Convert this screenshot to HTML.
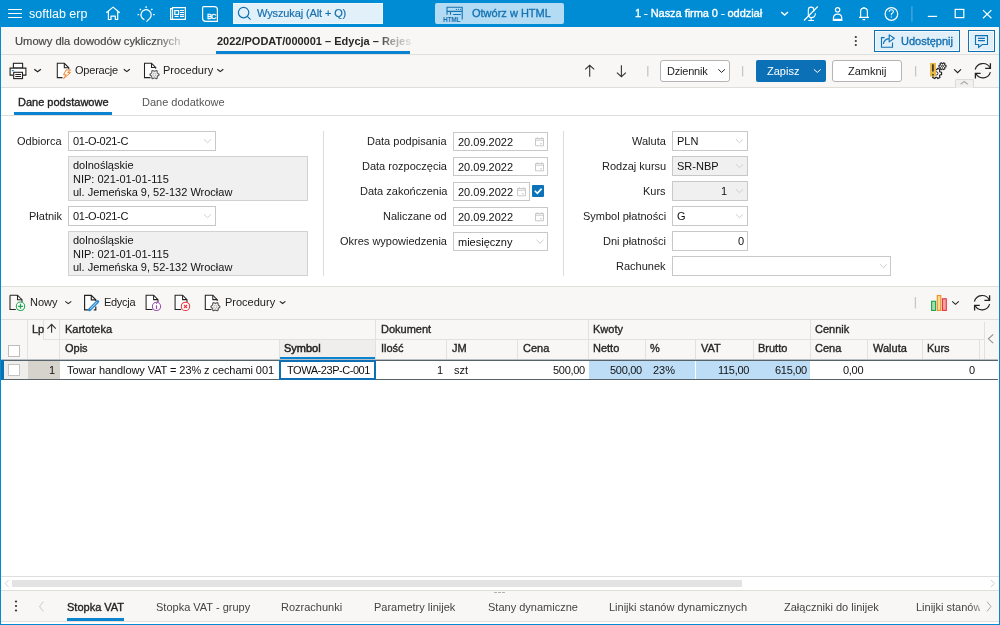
<!DOCTYPE html>
<html><head><meta charset="utf-8">
<style>
*{box-sizing:border-box;margin:0;padding:0}
html,body{width:1000px;height:625px;overflow:hidden;background:#fff}
body{position:relative;font-family:"Liberation Sans",sans-serif;font-size:11px;color:#222}
.a{position:absolute}
.t{position:absolute;white-space:nowrap;line-height:14px}
svg{position:absolute;overflow:visible;z-index:5}
.t{z-index:6;will-change:transform}
.m{-webkit-text-stroke:0.35px currentColor}
.inp{position:absolute;background:#fff;border:1px solid #c8c8c8}
.lbl{position:absolute;white-space:nowrap;line-height:14px;text-align:right;color:#222;font-size:11px;z-index:6;will-change:transform}
</style></head><body>
<!-- window borders -->
<div class="a" style="left:0;top:0;width:1000px;height:27px;background:#008cd5"></div>
<div class="a" style="left:0;top:0;width:1px;height:625px;background:#008cd5;z-index:50"></div>
<div class="a" style="left:999px;top:0;width:1px;height:625px;background:#008cd5;z-index:50"></div>
<div class="a" style="left:0;top:624px;width:1000px;height:1px;background:#008cd5;z-index:50"></div>

<!-- TITLE BAR -->
<div id="titlebar">
<svg width="1000" height="27" style="left:0;top:0" fill="none" stroke="#fff" stroke-width="1.2">
 <path d="M8 9.5H22M8 13.5H22M8 17.5H22" stroke-width="1.1"/>
 <path d="M106.3 12.8L113.1 7.1L119.7 12.8M108.4 11.2V19.5H111V16.2H115.3V19.5H117.7V11.2" stroke-linejoin="round"/>
 <path d="M144.4 19.6A5.1 5.1 0 1 1 149.8 18.3L146.5 21.6" />
 <path d="M146.1 6.3V8M139.8 8.9L140.9 10M152.4 8.9L151.3 10M137.6 14.7H139.2M153.1 14.7H154.7" stroke-width="1.3"/>
 <path d="M172.5 8.6H170.6V19.4H185.4V7.6H172.5V19.4"/>
 <rect x="174.8" y="10.6" width="3.8" height="3.9"/>
 <path d="M180 10.5H184M180 12.5H184M180 14.6H184M174.6 16.5H178.6M180 16.5H184"/>
 <path d="M203.8 6.6H214.3Q217.4 6.6 217.4 9.7V21.3H205.6Q202.6 21.3 202.6 18.3V7.8Q202.6 6.6 203.8 6.6Z"/>
 <path d="M235 3" />
 <path d="M804 20.5L817.8 6.5" stroke-width="1.1"/>
 <path d="M808.3 15.5V10Q808.3 7.1 811.1 7.1Q813.9 7.1 813.9 10V11.5M808.3 15.2Q808.9 17.6 811.1 17.6Q815.4 17.6 815.4 13.2M811.1 17.6V20.2M808.3 20.5H814" stroke-width="1.1"/>
 <circle cx="837.6" cy="9.8" r="2.2"/>
 <path d="M833.4 20.3V18.5Q833.4 14.2 837.6 14.2Q841.8 14.2 841.8 18.5V20.3Z"/>
 <path d="M833.6 19.5H841.6" stroke-width="1.4"/>
 <path d="M860.6 17.4V11.5Q860.6 8.1 863.9 8.1Q867.4 8.1 867.4 11.5V17.4M859 17.4H869M862.6 19.6H865.2" />
 <path d="M863.9 7.1V8" stroke-width="1.5"/>
 <circle cx="891.4" cy="14" r="6.3"/>
 <path d="M889.3 11.8Q889.3 9.8 891.4 9.8Q893.4 9.8 893.4 11.6Q893.4 12.9 891.4 13.8V15.3M891.4 16.6V17.6" stroke-width="1.1"/>
 <path d="M911.9 6.3V21.7" stroke="#4aa7de" stroke-width="1.3"/>
 <path d="M927.8 16.4H937.1" />
 <rect x="955.2" y="9.4" width="8.6" height="8.2"/>
 <path d="M983 10.1L991.4 18.3M991.4 10.1L983 18.3"/>
</svg>
<div class="t" style="left:29px;top:7px;color:#fff;font-size:12.5px;line-height:14px">softlab erp</div>
<svg width="1000" height="27" style="left:0;top:0"><text x="206.9" y="18.8" fill="#fff" stroke="#fff" stroke-width="0.35" font-family="Liberation Sans" font-size="7.2" letter-spacing="-0.6">BC</text></svg>
<div class="a" style="left:233px;top:3px;width:150px;height:21px;background:#e2f0f9;border:1px solid #eef7fc"></div>
<svg width="1000" height="27" style="left:0;top:0" fill="none" stroke="#0f72b4" stroke-width="1.2">
 <circle cx="243.6" cy="12.6" r="5.2"/>
 <path d="M247.3 16.4L250.6 19.6"/>
</svg>
<div class="t m" style="left:257px;top:6px;color:#1670b0;font-size:11px;letter-spacing:-0.12px;-webkit-text-stroke:0.2px #1670b0">Wyszukaj (Alt + Q)</div>
<div class="a" style="left:435px;top:3px;width:129px;height:21px;background:#b3dbf3;border-radius:2px"></div>
<svg width="1000" height="27" style="left:0;top:0" fill="none" stroke="#1673b2" stroke-width="1.2">
 <path d="M447 14.8V7.2H462.2V19.6M447 11.4H462.2M450.5 11.4V14.8M453.2 14.5H460.8" stroke-width="1.1"/>
 <circle cx="456.4" cy="9.3" r="0.65" fill="#1673b2" stroke="none"/><circle cx="458.5" cy="9.3" r="0.65" fill="#1673b2" stroke="none"/><circle cx="460.6" cy="9.3" r="0.65" fill="#1673b2" stroke="none"/>
 <text x="443" y="21.8" fill="#1673b2" stroke="none" font-family="Liberation Sans" font-weight="bold" font-size="6.4" letter-spacing="-0.15">HTML</text>
</svg>
<div class="t m" style="left:472px;top:6px;color:#1673b2;font-size:11px;">Otwórz w HTML</div>
<div class="t m" style="left:635px;top:6px;color:#fff;font-size:11px;letter-spacing:-0.05px">1 - Nasza firma 0 - oddział</div>
<svg width="1000" height="27" style="left:0;top:0" fill="none" stroke="#fff" stroke-width="1.4">
 <path d="M781.2 11.9L784.6 15.1L788 11.9"/>
</svg>
</div>

<!-- DOC TABS ROW -->
<div class="a" style="left:1px;top:27px;width:998px;height:28px;background:#f8f7f5;border-bottom:1px solid #e0dedb"></div>
<div class="t" style="left:15px;top:34px;color:#474747;font-size:11.2px;-webkit-text-stroke:0.2px #474747;-webkit-mask-image:linear-gradient(90deg,#000 140px,rgba(0,0,0,.25) 165px);">Umowy dla dowodów cyklicznych</div>
<div class="t" style="left:217px;top:34px;color:#262626;font-size:11px;font-weight:bold;width:194px;overflow:hidden;-webkit-mask-image:linear-gradient(90deg,#000 160px,rgba(0,0,0,.45) 175px,rgba(0,0,0,.12) 193px);">2022/PODAT/000001 – Edycja – Rejestracja</div>
<div class="a" style="left:216px;top:51px;width:194px;height:3px;background:#0a84d0"></div>
<svg width="1000" height="60" style="left:0;top:0">
 <circle cx="855.8" cy="37" r="1.1" fill="#333"/><circle cx="855.8" cy="41" r="1.1" fill="#333"/><circle cx="855.8" cy="45" r="1.1" fill="#333"/>
</svg>
<div class="a" style="left:874px;top:30px;width:86px;height:22px;background:#e1eff9;border:1px solid #0f72b4;box-shadow:inset 0 0 0 1px #f4fafd"></div>
<div class="a" style="left:968px;top:30px;width:27px;height:22px;background:#e1eff9;border:1px solid #0f72b4;box-shadow:inset 0 0 0 1px #f4fafd"></div>
<svg width="1000" height="60" style="left:0;top:0" fill="none" stroke="#0f72b4" stroke-width="1.1">
 <path d="M884.6 37.6H881.5V47.3H892.5V42.4"/>
 <path d="M883.4 44Q884 39 889.2 38.6V41.9L894.3 38.3L889.2 34.9V38.6" stroke-linejoin="round"/>
 <path d="M975.5 35.6H987.5V44.5H982.3L978.6 47.3V44.5H975.5Z" stroke-linejoin="miter"/>
 <path d="M978 38.4H984.9M978 40.6H984.9"/>
</svg>
<div class="t m" style="left:901px;top:34px;color:#1170b2;font-size:11px;">Udostępnij</div>

<!-- TOOLBAR -->
<div class="a" style="left:1px;top:55px;width:998px;height:33px;background:#f8f7f5;border-bottom:1px solid #e0dedb"></div>
<svg width="1000" height="90" style="left:0;top:0" fill="none" stroke="#222" stroke-width="1.3">
 <rect x="13.4" y="63.3" width="9.2" height="4.8" fill="#fff" stroke-width="1.1"/>
 <path d="M13.4 75.1H10.1V68.1H25.9V75.1H22.6" fill="#fff" stroke-width="1.1"/>
 <rect x="13.7" y="72.3" width="8.8" height="6.3" fill="#fff" stroke-width="1.1"/>
 <path d="M15.3 74.5H21M15.3 76.5H21" stroke-width="1"/>
 <path d="M11.8 70.6H13.8" stroke="#1a86d0" stroke-width="1.2"/>
 <path d="M34.3 69.2L37.6 71.8L40.9 69.2" stroke-width="1.2"/>
 <path d="M62.5 77.6H57.3V63.3H64.3L68.8 67.8V69.3" fill="#fff" stroke-width="1.05"/>
 <path d="M64.3 63.3V67.8H68.8" stroke-width="1.05"/>
 <path d="M66 70L63.6 74.8H66.2L63.6 78.6L70.4 72.6H67.6L70.6 70Z" stroke="#ee7d22" stroke-width="0.95" stroke-linejoin="round" fill="#fff"/>
 <path d="M123.8 69.2L126.8 71.6L129.8 69.2" stroke-width="1.2"/>
 <path d="M150.5 77.6H144.5V63.3H151.5L155.7 67.5V68.8" fill="#fff" stroke-width="1.05"/>
 <path d="M151.5 63.3V67.5H155.7" stroke-width="1.05"/>
 <path d="M217.3 69.2L220.3 71.6L223.3 69.2" stroke-width="1.2"/>
 <path d="M585.2 69.3L589.7 65.3L594.2 69.3M589.7 65.3V76.8" stroke-width="1.1" stroke="#333"/>
 <path d="M616.9 72.7L621.4 76.7L625.9 72.7M621.4 65.3V76.7" stroke-width="1.1" stroke="#333"/>
 <path d="M647.8 66V76.4" stroke="#c8c6c3" stroke-width="1.3"/>
 <path d="M742.6 66V76.4" stroke="#c8c6c3" stroke-width="1.3"/>
 <path d="M915.6 66V76.4" stroke="#c8c6c3" stroke-width="1.3"/>
 <path d="M718.3 69.3L721.6 72.4L724.9 69.3" stroke-width="1"/>
 <path d="M954.2 69.4L957.6 72.6L961 69.4" stroke-width="1.2"/>
</svg>
<svg width="1000" height="90" style="left:0;top:0" fill="none" stroke="#555" stroke-width="1.3">
 <path d="M157.56 73.12L158.99 74.27L158.99 74.93L157.56 76.08L157.31 76.51L157.03 78.32L156.46 78.65L154.75 77.99L154.25 77.99L152.54 78.65L151.97 78.32L151.69 76.51L151.44 76.08L150.01 74.93L150.01 74.27L151.44 73.12L151.69 72.69L151.97 70.88L152.54 70.55L154.25 71.21L154.75 71.21L156.46 70.55L157.03 70.88L157.31 72.69Z" fill="#fff" stroke="#5a5a5a" stroke-linejoin="round" stroke-width="1.2"/><circle cx="154.5" cy="74.6" r="1.6" stroke="#9a9a9a" stroke-width="0.8"/>
</svg>
<div class="t" style="left:75px;top:63px;color:#222;font-size:11px;letter-spacing:-0.22px">Operacje</div>
<div class="t" style="left:163px;top:63px;color:#222;font-size:11px">Procedury</div>
<div class="a" style="left:660px;top:60px;width:70px;height:22px;background:#fff;border:1px solid #b4b4b4;border-radius:3px"></div>
<div class="t" style="left:667px;top:64px;color:#222;font-size:11px;letter-spacing:-0.2px">Dziennik</div>
<div class="a" style="left:756px;top:60px;width:70px;height:22px;background:#0b70b5;border-radius:2px"></div>
<div class="t" style="left:767px;top:64px;color:#fff;font-size:11px">Zapisz</div>
<svg width="1000" height="90" style="left:0;top:0" fill="none" stroke="#fff" stroke-width="1.2">
 <path d="M813.9 69.4L817.3 72.4L820.7 69.4" stroke-width="1"/>
</svg>
<div class="a" style="left:832px;top:60px;width:70px;height:22px;background:#fff;border:1px solid #b4b4b4;border-radius:3px"></div>
<div class="t" style="left:848px;top:64px;color:#222;font-size:11px">Zamknij</div>
<svg width="1000" height="90" style="left:0;top:0" fill="none" stroke="#222" stroke-width="1.2">
 <path d="M939.88 71.85L941.57 72.22L941.57 74.58L939.88 74.95L939.43 75.73L939.96 77.37L937.91 78.55L936.75 77.27L935.85 77.27L934.69 78.55L932.64 77.37L933.17 75.73L932.72 74.95L931.03 74.58L931.03 72.22L932.72 71.85L933.17 71.07L932.64 69.43L934.69 68.25L935.85 69.53L936.75 69.53L937.91 68.25L939.96 69.43L939.43 71.07Z" fill="#fff" stroke-linejoin="round" stroke-width="1.2"/><circle cx="936.3" cy="73.4" r="1.6" stroke-width="1"/>
 <rect x="930" y="63" width="6" height="13.5" fill="#ebb94a" stroke="none"/>
 <path d="M932.9 64.3V71.6M932.9 73.9V75.5" stroke="#2a2a30" stroke-width="1.6"/>
 <path d="M944.89 65.17L946.01 65.41L946.01 66.99L944.89 67.23L944.59 67.75L944.94 68.85L943.58 69.64L942.80 68.78L942.20 68.78L941.42 69.64L940.06 68.85L940.41 67.75L940.11 67.23L938.99 66.99L938.99 65.41L940.11 65.17L940.41 64.65L940.06 63.55L941.42 62.76L942.20 63.62L942.80 63.62L943.58 62.76L944.94 63.55L944.59 64.65Z" fill="#fff" stroke-linejoin="round" stroke-width="1.1"/><circle cx="942.5" cy="66.2" r="1.0" stroke-width="1"/>
 <path d="M975.2 69.5A8 8 0 0 1 990.1 68M990.4 72.2A7.8 7.8 0 0 1 975.9 73.6" stroke-width="1.15"/>
 <path d="M990.4 63.2V68.3H985.2M975.4 78.6V73.4H980.6" stroke-width="1.3"/>
</svg>
<div class="a" style="left:955px;top:79px;width:19px;height:9px;background:#f1f0ee;border:1px solid #dddbd8;border-bottom:none;border-radius:2px 2px 0 0"></div>
<svg width="1000" height="90" style="left:0;top:0" fill="none" stroke="#aaa" stroke-width="1.1">
 <path d="M960.6 84.3L964.2 81.5L967.8 84.3"/>
</svg>

<!-- SUB TABS -->
<div class="a" style="left:1px;top:115px;width:998px;height:1px;background:#e0dedb"></div>
<div class="t m" style="left:18px;top:95px;color:#222;font-size:11px;">Dane podstawowe</div>
<div class="a" style="left:14px;top:112px;width:98px;height:3px;background:#0a84d0"></div>
<div class="t" style="left:142px;top:95px;color:#555;font-size:11px">Dane dodatkowe</div>

<!-- FORM -->
<div class="lbl" style="right:938px;top:134px">Odbiorca</div>
<div class="inp" style="left:68px;top:131px;width:148px;height:20px;background:#fff"></div><div class="t" style="left:73px;top:134px;color:#111;font-size:11px;letter-spacing:-0.3px">01-O-021-C</div>
<div class="a" style="left:68px;top:156px;width:240px;height:45px;background:#f0f0f0;border:1px solid #d2d2d2"></div>
<div class="t" style="left:73px;top:159px;color:#111;font-size:11px;line-height:13.6px">dolnośląskie<br>NIP: 021-01-01-115<br>ul. Jemeńska 9, 52-132 Wrocław</div>
<div class="lbl" style="right:938px;top:209px">Płatnik</div>
<div class="inp" style="left:68px;top:206px;width:148px;height:20px;background:#fff"></div><div class="t" style="left:73px;top:209px;color:#111;font-size:11px;letter-spacing:-0.3px">01-O-021-C</div>
<div class="a" style="left:68px;top:231px;width:240px;height:45px;background:#f0f0f0;border:1px solid #d2d2d2"></div>
<div class="t" style="left:73px;top:234px;color:#111;font-size:11px;line-height:13.6px">dolnośląskie<br>NIP: 021-01-01-115<br>ul. Jemeńska 9, 52-132 Wrocław</div>
<div class="a" style="left:323px;top:131px;width:1px;height:145px;background:#dcdcdc"></div>
<div class="lbl" style="right:553px;top:134px">Data podpisania</div>
<div class="inp" style="left:453px;top:132px;width:95px;height:19px;background:#fff"></div><div class="t" style="left:458px;top:135px;color:#111;font-size:11px">20.09.2022</div>
<div class="lbl" style="right:553px;top:159px">Data rozpoczęcia</div>
<div class="inp" style="left:453px;top:157px;width:95px;height:19px;background:#fff"></div><div class="t" style="left:458px;top:160px;color:#111;font-size:11px">20.09.2022</div>
<div class="lbl" style="right:553px;top:184px">Data zakończenia</div>
<div class="inp" style="left:453px;top:182px;width:77px;height:19px;background:#fff"></div><div class="t" style="left:458px;top:185px;color:#111;font-size:11px">20.09.2022</div>
<div class="lbl" style="right:553px;top:209px">Naliczane od</div>
<div class="inp" style="left:453px;top:207px;width:95px;height:19px;background:#fff"></div><div class="t" style="left:458px;top:210px;color:#111;font-size:11px">20.09.2022</div>
<div class="lbl" style="right:553px;top:234px">Okres wypowiedzenia</div>
<div class="inp" style="left:453px;top:232px;width:95px;height:19px;background:#fff"></div><div class="t" style="left:458px;top:235px;color:#111;font-size:11px">miesięczny</div>
<div class="a" style="left:532px;top:185px;width:12px;height:12px;background:#0b73b8;border-radius:1px"></div>
<div class="a" style="left:563px;top:131px;width:1px;height:145px;background:#dcdcdc"></div>
<div class="lbl" style="right:334px;top:134px">Waluta</div>
<div class="inp" style="left:672px;top:131px;width:76px;height:20px;background:#fff"></div><div class="t" style="left:677px;top:134px;color:#111;font-size:11px">PLN</div>
<div class="lbl" style="right:334px;top:159px">Rodzaj kursu</div>
<div class="inp" style="left:672px;top:156px;width:76px;height:20px;background:#f0f0f0"></div><div class="t" style="left:677px;top:159px;color:#111;font-size:11px">SR-NBP</div>
<div class="lbl" style="right:334px;top:184px">Kurs</div>
<div class="inp" style="left:672px;top:181px;width:76px;height:20px;background:#f0f0f0"></div><div class="t" style="right:273px;top:184px;color:#111;font-size:11px">1</div>
<div class="lbl" style="right:334px;top:209px">Symbol płatności</div>
<div class="inp" style="left:672px;top:206px;width:76px;height:20px;background:#fff"></div><div class="t" style="left:677px;top:209px;color:#111;font-size:11px">G</div>
<div class="lbl" style="right:334px;top:234px">Dni płatności</div>
<div class="inp" style="left:672px;top:231px;width:76px;height:20px;background:#fff"></div><div class="t" style="right:256px;top:234px;color:#111;font-size:11px">0</div>
<div class="lbl" style="right:334px;top:259px">Rachunek</div>
<div class="inp" style="left:672px;top:256px;width:219px;height:20px;background:#fff"></div>
<svg width="1000" height="300" style="left:0;top:0" fill="none" stroke="#cfcfcf" stroke-width="1">
<path d="M204.0 139.3L207.5 142.7L211.0 139.3"/>
<path d="M204.0 214.3L207.5 217.7L211.0 214.3"/>
<path d="M536.5 239.8L540 243.2L543.5 239.8"/>
<path d="M736 139.3L739.5 142.7L743 139.3"/>
<path d="M736 164.3L739.5 167.7L743 164.3"/>
<path d="M736 189.3L739.5 192.7L743 189.3"/>
<path d="M736 214.3L739.5 217.7L743 214.3"/>
<path d="M880 264.3L883.5 267.7L887 264.3"/>
<path d="M535.5 138.5H543.5V145.8H535.5Z M535.5 140.2H543.5" stroke="#c9c9c9"/><path d="M537.2 137.2V139.0M541.8 137.2V139.0" stroke="#c9c9c9"/><rect x="540.3" y="143.0" width="1.4" height="1.4" fill="#c9c9c9" stroke="none"/>
<path d="M535.5 163.5H543.5V170.8H535.5Z M535.5 165.2H543.5" stroke="#c9c9c9"/><path d="M537.2 162.2V164.0M541.8 162.2V164.0" stroke="#c9c9c9"/><rect x="540.3" y="168.0" width="1.4" height="1.4" fill="#c9c9c9" stroke="none"/>
<path d="M517.5 188.5H525.5V195.8H517.5Z M517.5 190.2H525.5" stroke="#c9c9c9"/><path d="M519.2 187.2V189.0M523.8 187.2V189.0" stroke="#c9c9c9"/><rect x="522.3" y="193.0" width="1.4" height="1.4" fill="#c9c9c9" stroke="none"/>
<path d="M535.5 213.5H543.5V220.8H535.5Z M535.5 215.2H543.5" stroke="#c9c9c9"/><path d="M537.2 212.2V214.0M541.8 212.2V214.0" stroke="#c9c9c9"/><rect x="540.3" y="218.0" width="1.4" height="1.4" fill="#c9c9c9" stroke="none"/>
<path d="M534.8 190.8L537.4 193.4L541.6 188.6" stroke="#fff" stroke-width="1.6"/>
</svg>

<!-- TABLE TOOLBAR -->
<div class="a" style="left:1px;top:286px;width:998px;height:34px;background:#f8f7f5;border-top:1px solid #e0dedb;border-bottom:1px solid #e0dedb"></div>
<svg width="1000" height="330" style="left:0;top:0" fill="none" stroke="#222" stroke-width="1.05">
 <path d="M10 295.2H17.5L22 299.7V302" fill="#fff"/><path d="M10 295.2V309.5H15.8" fill="none"/><path d="M17.5 295.2V299.7H22"/>
 <circle cx="20.5" cy="306.3" r="4.2" stroke="#22a94f" fill="#fff"/><path d="M20.5 303.8V308.8M18 306.3H23" stroke="#22a94f" stroke-width="1.3"/>
 <path d="M65.3 301.3L68.3 303.6L71.3 301.3"/>
 <path d="M89 309.8H84.6V295.4H91.3L95.8 299.8V301" fill="#fff" stroke-width="1.15"/><path d="M91.3 295.4V299.8H95.8" stroke-width="1.15"/>
 <path d="M95.8 306.5V309.8H93.8" stroke-width="1.15"/>
 <path d="M89.6 309.6L97.6 301.6" stroke="#2a8ad2" stroke-width="3.2" stroke-linecap="round"/>
 <path d="M90.2 309L97 302.2" stroke="#cfe6f8" stroke-width="0.9"/>
 <path d="M88.6 310.7L89.3 308.6L90.8 310.1Z" fill="#2a8ad2" stroke="none"/>
 <path d="M152.5 309.5H146.1V295.2H153.6L158 299.6V302" fill="#fff"/><path d="M153.6 295.2V299.6H158"/>
 <circle cx="156.5" cy="306.4" r="4.1" stroke="#9a4db4" fill="#fff"/><path d="M156.5 305.2V309M156.5 303.3V304" stroke="#9a4db4" stroke-width="1.2"/>
 <path d="M181.2 309.5H175.1V295.2H182.6L187 299.6V302" fill="#fff"/><path d="M182.6 295.2V299.6H187"/>
 <circle cx="185.5" cy="306.4" r="4.2" stroke="#e6353d" fill="#fff"/><path d="M183.9 304.8L187.1 308M187.1 304.8L183.9 308" stroke="#e6353d" stroke-width="1.1"/>
 <path d="M211.5 309.5H205.3V295.2H212.8L217.2 299.6V301" fill="#fff"/><path d="M212.8 295.2V299.6H217.2"/>
 <path d="M279.8 301.3L282.6 303.5L285.4 301.3"/>
 <path d="M915.4 297V308.4" stroke="#c8c6c3" stroke-width="1.3"/>
 <path d="M952.2 301.3L955.5 304.4L958.8 301.3"/>
 <path d="M974.4 301.5A8 8 0 0 1 989.3 300M989.6 304.2A7.8 7.8 0 0 1 975.1 305.6" stroke-width="1.15"/>
 <path d="M989.6 295.2V300.3H984.4M974.6 310.6V305.4H979.8" stroke-width="1.3"/>
 <rect x="931.6" y="301.3" width="4" height="9.1" stroke="#1ea34b" fill="#a6dbb4" stroke-width="1.1"/>
 <rect x="937.3" y="295.6" width="3.5" height="14.8" stroke="#f08a25" fill="#f8dd8a" stroke-width="1.1"/>
 <rect x="942.5" y="298.8" width="3.8" height="11.6" stroke="#e8343e" fill="#f4a4a6" stroke-width="1.1"/>
</svg>
<svg width="1000" height="330" style="left:0;top:0" fill="none" stroke="#555" stroke-width="1.3">
 <path d="M218.46 305.22L219.89 306.37L219.89 307.03L218.46 308.18L218.21 308.61L217.93 310.42L217.36 310.75L215.65 310.09L215.15 310.09L213.44 310.75L212.87 310.42L212.59 308.61L212.34 308.18L210.91 307.03L210.91 306.37L212.34 305.22L212.59 304.79L212.87 302.98L213.44 302.65L215.15 303.31L215.65 303.31L217.36 302.65L217.93 302.98L218.21 304.79Z" fill="#fff" stroke="#5a5a5a" stroke-linejoin="round" stroke-width="1.2"/><circle cx="215.4" cy="306.7" r="1.6" stroke="#9a9a9a" stroke-width="0.8"/>
</svg>
<div class="t" style="left:30px;top:295px;color:#222;font-size:11px">Nowy</div>
<div class="t" style="left:103.5px;top:295px;color:#222;font-size:11px;letter-spacing:-0.3px">Edycja</div>
<div class="t" style="left:224.5px;top:295px;color:#222;font-size:11px">Procedury</div>

<!-- TABLE -->
<div class="a" style="left:1px;top:320px;width:998px;height:40px;background:#f8f7f5"></div>
<div class="a" style="left:280px;top:340px;width:96px;height:20px;background:#efeeec"></div>
<div class="a" style="left:280px;top:357px;width:96px;height:2px;background:#0a84d0"></div>
<div class="a" style="left:43px;top:339px;width:941px;height:1px;background:#e3e1de"></div>
<div class="a" style="left:27px;top:320px;width:1px;height:40px;background:#e3e1de"></div>
<div class="a" style="left:59px;top:320px;width:1px;height:40px;background:#e3e1de"></div>
<div class="a" style="left:43px;top:320px;width:1px;height:19px;background:#e3e1de"></div>
<div class="a" style="left:375px;top:320px;width:1px;height:40px;background:#e3e1de"></div>
<div class="a" style="left:588px;top:320px;width:1px;height:40px;background:#e3e1de"></div>
<div class="a" style="left:810px;top:320px;width:1px;height:40px;background:#e3e1de"></div>
<div class="a" style="left:979px;top:339px;width:1px;height:21px;background:#e3e1de"></div>
<div class="a" style="left:279px;top:340px;width:1px;height:20px;background:#e3e1de"></div>
<div class="a" style="left:446px;top:340px;width:1px;height:20px;background:#e3e1de"></div>
<div class="a" style="left:517px;top:340px;width:1px;height:20px;background:#e3e1de"></div>
<div class="a" style="left:645px;top:340px;width:1px;height:20px;background:#e3e1de"></div>
<div class="a" style="left:695px;top:340px;width:1px;height:20px;background:#e3e1de"></div>
<div class="a" style="left:753px;top:340px;width:1px;height:20px;background:#e3e1de"></div>
<div class="a" style="left:867px;top:340px;width:1px;height:20px;background:#e3e1de"></div>
<div class="a" style="left:922px;top:340px;width:1px;height:20px;background:#e3e1de"></div>
<div class="a" style="left:980px;top:320px;width:19px;height:1px;background:#f8f7f5"></div>
<div class="a" style="left:984px;top:322px;width:1px;height:38px;background:#e3e1de"></div>
<div class="a" style="left:1px;top:359px;width:997px;height:1px;background:#b9c0c4"></div><div class="a" style="left:1px;top:360px;width:997px;height:1px;background:#56636b"></div>
<div class="a" style="left:1px;top:361px;width:998px;height:18px;background:#fff"></div>
<div class="a" style="left:1px;top:379px;width:997px;height:1px;background:#56636b"></div>
<div class="a" style="left:1px;top:360px;width:3px;height:20px;background:#0b6fb0"></div>
<div class="a" style="left:4px;top:361px;width:24px;height:18px;background:#eeedeb"></div>
<div class="a" style="left:28px;top:361px;width:32px;height:18px;background:#d6d2cc"></div>
<div class="a" style="left:589px;top:361px;width:106px;height:18px;background:#bddcf5"></div>
<div class="a" style="left:696px;top:361px;width:114px;height:18px;background:#bddcf5"></div>
<div class="a" style="left:279px;top:360px;width:97px;height:20px;border:2px solid #0f6fb3"></div>
<div class="a" style="left:8px;top:345px;width:12px;height:12px;background:#fff;border:1px solid #bdbdbd"></div>
<div class="a" style="left:8px;top:364px;width:12px;height:12px;background:#fff;border:1px solid #c4c4c4"></div>
<div class="t m" style="left:31.5px;top:322px;color:#262626;font-size:11px;width:11.5px;overflow:hidden">Lp</div>
<div class="t m" style="left:65px;top:322px;color:#262626;font-size:11px">Kartoteka</div>
<div class="t m" style="left:380.5px;top:322px;color:#262626;font-size:11px">Dokument</div>
<div class="t m" style="left:593px;top:322px;color:#262626;font-size:11px">Kwoty</div>
<div class="t m" style="left:814.5px;top:322px;color:#262626;font-size:11px">Cennik</div>
<div class="t m" style="left:65px;top:341px;color:#262626;font-size:11px">Opis</div>
<div class="t m" style="left:284px;top:341px;color:#1e1e1e;font-size:11px;-webkit-text-stroke:0.5px #1e1e1e">Symbol</div>
<div class="t m" style="left:380.5px;top:341px;color:#262626;font-size:11px">Ilość</div>
<div class="t m" style="left:451.5px;top:341px;color:#262626;font-size:11px">JM</div>
<div class="t m" style="left:522.5px;top:341px;color:#262626;font-size:11px">Cena</div>
<div class="t m" style="left:593px;top:341px;color:#262626;font-size:11px">Netto</div>
<div class="t m" style="left:650px;top:341px;color:#262626;font-size:11px">%</div>
<div class="t m" style="left:701px;top:341px;color:#262626;font-size:11px">VAT</div>
<div class="t m" style="left:758px;top:341px;color:#262626;font-size:11px">Brutto</div>
<div class="t m" style="left:814.5px;top:341px;color:#262626;font-size:11px">Cena</div>
<div class="t m" style="left:873px;top:341px;color:#262626;font-size:11px">Waluta</div>
<div class="t m" style="left:927px;top:341px;color:#262626;font-size:11px">Kurs</div>
<div class="t" style="right:944.8px;top:363px;color:#111;font-size:11px">1</div>
<div class="t" style="left:67px;top:363px;color:#111;font-size:11px;letter-spacing:-0.08px">Towar handlowy VAT = 23% z cechami 001</div>
<div class="t" style="left:287px;top:363px;color:#111;font-size:11px;letter-spacing:-0.45px">TOWA-23P-C-001</div>
<div class="t" style="right:557px;top:363px;color:#111;font-size:11px">1</div>
<div class="t" style="left:454px;top:363px;color:#111;font-size:11px">szt</div>
<div class="t" style="right:415.5px;top:363px;color:#111;font-size:11px;letter-spacing:-0.3px">500,00</div>
<div class="t" style="right:358.5px;top:363px;color:#111;font-size:11px;letter-spacing:-0.3px">500,00</div>
<div class="t" style="left:653px;top:363px;color:#111;font-size:11px">23%</div>
<div class="t" style="right:250.5px;top:363px;color:#111;font-size:11px;letter-spacing:-0.3px">115,00</div>
<div class="t" style="right:193.5px;top:363px;color:#111;font-size:11px;letter-spacing:-0.3px">615,00</div>
<div class="t" style="right:136.5px;top:363px;color:#111;font-size:11px;letter-spacing:-0.3px">0,00</div>
<div class="t" style="right:24.5px;top:363px;color:#111;font-size:11px">0</div>
<svg width="1000" height="400" style="left:0;top:0" fill="none" stroke="#222" stroke-width="1.2">
 <path d="M47.4 328.6L51.6 324.4L55.8 328.6M51.6 324.4V332.8" stroke-width="1.1" stroke="#333"/>
 <path d="M993.2 334.4L988.4 338.8L993.2 343.2" stroke="#8f8f8f" stroke-width="1.1"/>
</svg>

<!-- SCROLLBAR -->
<div class="a" style="left:1px;top:576px;width:998px;height:15px;background:#fff;border-top:1px solid #e0dedb;border-bottom:1px solid #e0dedb"></div>
<div class="a" style="left:12px;top:580px;width:730px;height:7px;background:#e3e3e3"></div>
<svg width="1000" height="625" style="left:0;top:0" fill="none" stroke="#d0d0d0" stroke-width="1">
 <path d="M8.6 580L5.2 583.5L8.6 587"/>
 <path d="M991 580L994.4 583.5L991 587"/>
 <path d="M494 592.5H497M498 592.5H501M502 592.5H505" stroke="#b0b0b0"/>
</svg>

<!-- BOTTOM TABS -->
<div class="a" style="left:1px;top:591px;width:998px;height:31px;background:#f8f7f5;border-bottom:1px solid #e0dedb"></div>
<svg width="1000" height="625" style="left:0;top:0" fill="none" stroke="#333" stroke-width="1">
 <circle cx="16" cy="601.5" r="1.1" fill="#333" stroke="none"/><circle cx="16" cy="606" r="1.1" fill="#333" stroke="none"/><circle cx="16" cy="610.5" r="1.1" fill="#333" stroke="none"/>
 <path d="M43.5 601.5L39.5 606.5L43.5 611.5" stroke="#d4d4d4" stroke-width="1.1"/>
 <path d="M987 601.6L991 606.5L987 611.4" stroke="#a8a8a8" stroke-width="1"/>
</svg>
<div class="t m" style="left:67px;top:600px;color:#222;font-size:11px;">Stopka VAT</div>
<div class="a" style="left:67px;top:618px;width:57px;height:3px;background:#0a84d0"></div>
<div class="t" style="left:156px;top:600px;color:#444;font-size:11px">Stopka VAT - grupy</div>
<div class="t" style="left:281px;top:600px;color:#444;font-size:11px">Rozrachunki</div>
<div class="t" style="left:373.5px;top:600px;color:#444;font-size:11px">Parametry linijek</div>
<div class="t" style="left:487.5px;top:600px;color:#444;font-size:11px">Stany dynamiczne</div>
<div class="t" style="left:609px;top:600px;color:#444;font-size:11px">Linijki stanów dynamicznych</div>
<div class="t" style="left:783.5px;top:600px;color:#444;font-size:11px">Załączniki do linijek</div>
<div class="t" style="left:915.5px;top:600px;color:#444;font-size:11px;width:64px;overflow:hidden;-webkit-mask-image:linear-gradient(90deg,#000 54px,rgba(0,0,0,.5) 64px)">Linijki stanów dynamicznych</div>

</body></html>
